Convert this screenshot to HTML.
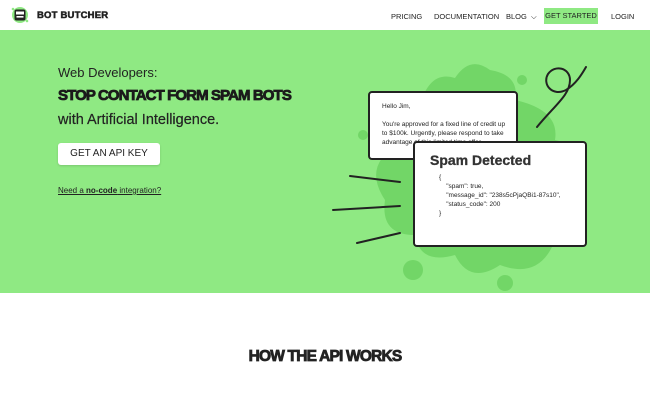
<!DOCTYPE html>
<html><head><meta charset="utf-8">
<style>
*{margin:0;padding:0;box-sizing:border-box}
body{width:650px;height:414px;overflow:hidden;background:#fff;font-family:"Liberation Sans",sans-serif;color:#222;position:relative}
.hdr{position:absolute;top:0;left:0;width:650px;height:30px;background:#fff}
.logo{position:absolute;left:11px;top:6px;width:18px;height:18px}
.brand{position:absolute;left:37px;top:10px;font-weight:900;font-size:9.5px;letter-spacing:.2px;color:#222;-webkit-text-stroke:.5px #222}
.nav{position:absolute;top:12px;font-size:7.5px;color:#222}
.gs{position:absolute;left:544px;top:8px;width:54px;height:16px;background:#8fe983;font-size:7.5px;text-align:center;line-height:16px}
.hero{position:absolute;top:30px;left:0;width:650px;height:263px;background:#8fe983}
.t1{position:absolute;left:58px;top:65px;font-size:13px}
.t2{position:absolute;left:58px;top:87px;font-size:15px;font-weight:900;letter-spacing:-.9px;color:#1b1b1b;-webkit-text-stroke:.8px #1b1b1b}
.t3{position:absolute;left:58px;top:112px;font-size:14.5px;-webkit-text-stroke:.2px #222}
.btn{position:absolute;left:58px;top:143px;width:102px;height:22px;background:#fff;border-radius:3px;font-size:10px;text-align:center;line-height:22px;color:#222;box-shadow:0 1px 2px rgba(0,0,0,.15)}
.nc{position:absolute;left:58px;top:186px;font-size:8px;text-decoration:underline}
.card{position:absolute;background:#fff;border:2px solid #222;border-radius:4px}
.h2{position:absolute;left:0;width:650px;top:348px;text-align:center;font-size:15.5px;font-weight:900;letter-spacing:-.8px;color:#222;-webkit-text-stroke:.8px #222}
</style></head><body>
<div class="hdr">
<svg class="logo" viewBox="0 0 18 18"><circle cx="9" cy="9" r="8" fill="#8fe983"/><circle cx="2" cy="3" r="1.3" fill="#8fe983"/><circle cx="16" cy="15" r="1.3" fill="#8fe983"/><rect x="3.5" y="3.5" width="11" height="11" rx="2" fill="#222"/><rect x="5" y="5.5" width="8" height="3" fill="#fff"/><rect x="5.5" y="10" width="7" height="1.6" fill="#fff"/></svg>
<div class="brand">BOT BUTCHER</div>
<div class="nav" style="left:391px">PRICING</div>
<div class="nav" style="left:434px">DOCUMENTATION</div>
<div class="nav" style="left:506px">BLOG &nbsp;⌵</div>
<div class="gs">GET STARTED</div>
<div class="nav" style="left:611px">LOGIN</div>
</div>
<div class="hero">
<svg style="position:absolute;left:0;top:0" width="650" height="263" viewBox="0 30 650 263">
<g fill="#72d667">
<path d="M420 105 Q430 70 455 78 Q470 55 490 70 Q520 75 515 100 Q560 110 555 140 Q600 150 580 190 Q590 230 555 240 Q540 280 500 265 Q470 285 455 255 Q420 265 415 235 Q380 235 385 200 Q365 170 390 150 Q380 120 420 105Z"/>
<circle cx="505" cy="283" r="8"/><circle cx="413" cy="270" r="10"/><circle cx="522" cy="80" r="5"/><circle cx="363" cy="135" r="5"/><circle cx="513" cy="252" r="4"/>
</g>
<g stroke="#222" stroke-width="2" fill="none" stroke-linecap="round">
<path d="M350 176 L400 182"/><path d="M333 210 L400 206"/><path d="M357 243 L400 233"/>
<path d="M537 127 C555 105 570 95 570 80 C570 68 555 64 548 74 C542 84 552 97 566 90 C576 84 582 74 586 67"/>
</g>
</svg>
</div>
<div class="t1">Web Developers:</div>
<div class="t2">STOP CONTACT FORM SPAM BOTS</div>
<div class="t3">with Artificial Intelligence.</div>
<div class="btn">GET AN API KEY</div>
<div class="nc">Need a <b>no-code</b> integration?</div>
<div class="card" style="left:368px;top:91px;width:150px;height:69px;font-size:6.5px;padding:9px 0 0 12px;line-height:9px;overflow:hidden">Hello Jim,<br><br>You're approved for a fixed line of credit up<br>to $100k. Urgently, please respond to take<br>advantage of this limited time offer</div>
<div class="card" style="left:413px;top:141px;width:174px;height:106px;padding:9px 0 0 15px">
<div style="font-size:14px;font-weight:bold;color:#333;-webkit-text-stroke:.3px #333">Spam Detected</div>
<div style="font-size:6.5px;line-height:9px;margin-top:5px;padding-left:9px">{<br>&nbsp;&nbsp;&nbsp;&nbsp;"spam": true,<br>&nbsp;&nbsp;&nbsp;&nbsp;"message_id": "238s5cPjaQBi1-87s10",<br>&nbsp;&nbsp;&nbsp;&nbsp;"status_code": 200<br>}</div>
</div>
<div class="h2">HOW THE API WORKS</div>
</body></html>
